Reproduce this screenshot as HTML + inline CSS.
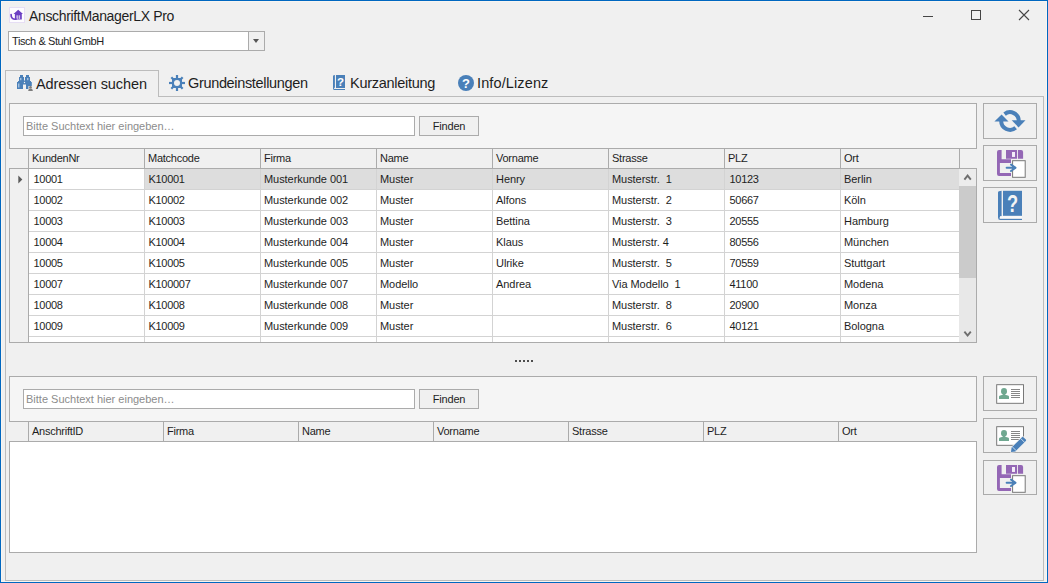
<!DOCTYPE html>
<html lang="de">
<head>
<meta charset="utf-8">
<title>AnschriftManagerLX Pro</title>
<style>
*{box-sizing:border-box;margin:0;padding:0}
html,body{width:1048px;height:583px;overflow:hidden;background:#f0f0f0}
body{font-family:"Liberation Sans","DejaVu Sans",sans-serif;font-size:11px;color:#1e1e1e;position:relative}
.abs{position:absolute}
#win{position:absolute;left:0;top:0;width:1048px;height:583px;border:1px solid #0067c0;box-shadow:inset 0 0 0 1px #f8f5f1;background:#f0f0f0}
#title{position:absolute;left:29px;top:7px;font-size:14px;letter-spacing:-0.34px;line-height:18px;color:#1e1e1e;white-space:nowrap}
#combo{position:absolute;left:8px;top:31px;width:257px;height:20px;border:1px solid #ababab;background:#fff}
#combo .txt{position:absolute;left:3px;top:0;line-height:19px;font-size:11px;white-space:nowrap;letter-spacing:-0.42px}
#combo .dd{position:absolute;right:0;top:0;width:16px;height:18px;border-left:1px solid #ababab;background:#f0f0f0}
#combo .dd:after{content:"";position:absolute;left:4px;top:7px;border:3.5px solid transparent;border-top:4px solid #555;border-bottom:none}
#tabpage{position:absolute;left:5px;top:96px;width:1039px;height:485px;border:1px solid #bcbcbc;background:#f0f0f0}
.tab{position:absolute;top:70px;height:27px;font-size:14.5px;line-height:26px;white-space:nowrap;color:#1e1e1e}
.tab.act{left:5px;width:154px;border:1px solid #bcbcbc;border-bottom:none;background:#f0f0f0}
.tab span{position:absolute;top:0}
.panel{position:absolute;left:9px;width:968px;border:1px solid #ababab;background:#f5f5f5}
.search{position:absolute;left:23px;width:392px;height:20px;border:1px solid #ababab;background:#fff;color:#8c8c8c;font-size:11px;line-height:18px;padding-left:2px;white-space:nowrap}
.find{letter-spacing:-0.2px;position:absolute;left:419px;width:60px;height:20px;border:1px solid #ababab;background:#f0f0f0;text-align:center;line-height:18px;font-size:11px}
.hdr{position:absolute;left:9px;height:21px;border-top:1px solid #ababab;border-bottom:1px solid #ababab;background:#f0f0f0;width:968px}
.hc{position:absolute;top:0;height:19px;line-height:19px;border-left:1px solid #ababab;padding-left:3px;font-size:11px;white-space:nowrap;letter-spacing:-0.25px}
.row{position:absolute;left:18px;width:931px;height:21px;border-bottom:1px solid #d3d3d3;background:#fff}
.row.sel{background:#dddddd}
.c{position:absolute;top:0;height:20px;line-height:20px;border-left:1px solid #d3d3d3;padding-left:4px;font-size:11px;white-space:nowrap}
.c{padding-left:3px;letter-spacing:-0.06px}
.c.n{letter-spacing:-0.3px;padding-left:4.5px}
.c.n.k{padding-left:3.5px}
.btn{position:absolute;left:983px;width:54px;height:35px;border:1px solid #ababab;background:#f0f0f0}
.btn svg{position:absolute}
</style>
</head>
<body>
<div id="win"></div>
<svg class="abs" style="left:9px;top:7px" width="16" height="16" viewBox="0 0 16 16"><rect x="0.5" y="0.5" width="15" height="15" fill="#fdfcff" stroke="#e6def4"/><path d="M9.2 2.7 L14 7.1 H12.8 V12.6 H5.9 V7.1 H4.5 Z" fill="#6b3fc3"/><rect x="7.4" y="8.3" width="1.5" height="3.6" fill="#cfc2ea"/><rect x="9.6" y="8.3" width="1.5" height="3.6" fill="#cfc2ea"/><path d="M2.1 7.6 C1.8 11.2 4.2 12.6 7 12.2" fill="none" stroke="#6b3fc3" stroke-width="1.7" stroke-linecap="round"/></svg>

<svg class="abs" style="left:910px;top:0" width="138" height="32" viewBox="0 0 138 32"><g fill="none" stroke="#454545" stroke-width="1"><path d="M13 16.5 H23"/><rect x="61.5" y="10.5" width="9" height="9"/><path d="M109 10 L119 20 M119 10 L109 20" stroke-width="1.1"/></g></svg>
<div id="title">AnschriftManagerLX Pro</div>
<div id="combo"><div class="txt">Tisch &amp; Stuhl GmbH</div><div class="dd"></div></div>
<div id="tabpage"></div>
<div class="tab act"><span style="left:30px;letter-spacing:-0.07px">Adressen suchen</span></div>
<div class="tab" style="left:168px"><span style="left:20px;letter-spacing:-0.34px">Grundeinstellungen</span></div>
<div class="tab" style="left:332px"><span style="left:18px;letter-spacing:-0.27px">Kurzanleitung</span></div>
<div class="tab" style="left:458px"><span style="left:19px;letter-spacing:0.12px">Info/Lizenz</span></div>
<svg class="abs" style="left:16px;top:74px" width="18" height="18" viewBox="0 0 18 18"><g fill="#4a80b9"><rect x="4" y="1" width="3" height="2"/><rect x="3" y="3" width="5" height="4"/><rect x="2" y="7" width="6.5" height="2"/><rect x="1" y="8" width="6" height="7"/><rect x="10" y="1" width="3" height="2"/><rect x="9" y="3" width="5" height="4"/><rect x="9" y="7" width="6" height="2"/><rect x="10" y="8" width="5.8" height="4"/><rect x="10" y="12" width="2.4" height="3"/><rect x="7" y="6.5" width="3" height="4"/></g><rect x="4.3" y="4" width="1" height="2.2" fill="#c9dcef"/><rect x="11.3" y="4" width="1" height="2.2" fill="#c9dcef"/><rect x="2.3" y="9.5" width="1" height="4" fill="#c9dcef"/><circle cx="8.5" cy="8.5" r="0.7" fill="#f0f0f0"/><g fill="#7d7d7d"><circle cx="14.5" cy="13.3" r="1.3"/><path d="M12.2 17 C12.2 15 13.5 14.6 14.5 14.6 C15.5 14.6 16.8 15 16.8 17 Z"/></g></svg><svg class="abs" style="left:168px;top:74px" width="18" height="18" viewBox="-9 -9 18 18"><g fill="#4a80b9"><rect x="-1.1" y="-8" width="2.2" height="4" transform="rotate(0)"/><rect x="-1.1" y="-8" width="2.2" height="4" transform="rotate(45)"/><rect x="-1.1" y="-8" width="2.2" height="4" transform="rotate(90)"/><rect x="-1.1" y="-8" width="2.2" height="4" transform="rotate(135)"/><rect x="-1.1" y="-8" width="2.2" height="4" transform="rotate(180)"/><rect x="-1.1" y="-8" width="2.2" height="4" transform="rotate(225)"/><rect x="-1.1" y="-8" width="2.2" height="4" transform="rotate(270)"/><rect x="-1.1" y="-8" width="2.2" height="4" transform="rotate(315)"/><path fill-rule="evenodd" d="M-5 -4 Q-5 -5 -4 -5 H4 Q5 -5 5 -4 V4 Q5 5 4 5 H-4 Q-5 5 -5 4 Z M3 0 A3 3 0 1 0 -3 0 A3 3 0 1 0 3 0 Z"/></g></svg><svg class="abs" style="left:332px;top:74px" width="16" height="18" viewBox="0 0 16 18"><g fill="#4a80b9"><path d="M1 2.2 Q1 1 2.9 1 V13.6 Q2 13.8 2 14.8 Q2 15 2.6 15 H13 V16 H2.6 Q1 16 1 14.4 Z"/><rect x="4" y="1" width="9" height="13"/></g><text x="8.5" y="11.8" font-family="Liberation Sans,sans-serif" font-weight="bold" font-size="11.5" text-anchor="middle" fill="#fff">?</text></svg><svg class="abs" style="left:457px;top:74px" width="18" height="18" viewBox="0 0 18 18"><circle cx="9" cy="9" r="8" fill="#4a80b9"/><text x="9" y="13.6" font-family="Liberation Sans,sans-serif" font-weight="bold" font-size="13" text-anchor="middle" fill="#fff">?</text></svg>
<!--GRID-->
<div class="panel" style="top:103px;height:240px"></div>
<div class="search" style="top:116px">Bitte Suchtext hier eingeben…</div>
<div class="find" style="top:116px">Finden</div>
<div class="abs" id="g1" style="left:10px;top:169px;width:966px;height:173px;overflow:hidden;background:#fff">
<div class="abs" style="left:0;top:0;width:18px;height:173px;background:#f0f0f0"></div>
<div class="row sel" style="top:0px">
<div class="c n" style="left:0px;width:116px;background:#fff">10001</div>
<div class="c n k" style="left:116px;width:116px">K10001</div>
<div class="c" style="left:232px;width:116px">Musterkunde 001</div>
<div class="c" style="left:348px;width:116px">Muster</div>
<div class="c" style="left:464px;width:116px">Henry</div>
<div class="c" style="left:580px;width:116px">Musterstr.&nbsp; 1</div>
<div class="c n" style="left:696px;width:116px">10123</div>
<div class="c" style="left:812px;width:119px">Berlin</div>
</div>
<div class="row" style="top:21px">
<div class="c n" style="left:0px;width:116px">10002</div>
<div class="c n k" style="left:116px;width:116px">K10002</div>
<div class="c" style="left:232px;width:116px">Musterkunde 002</div>
<div class="c" style="left:348px;width:116px">Muster</div>
<div class="c" style="left:464px;width:116px">Alfons</div>
<div class="c" style="left:580px;width:116px">Musterstr.&nbsp; 2</div>
<div class="c n" style="left:696px;width:116px">50667</div>
<div class="c" style="left:812px;width:119px">Köln</div>
</div>
<div class="row" style="top:42px">
<div class="c n" style="left:0px;width:116px">10003</div>
<div class="c n k" style="left:116px;width:116px">K10003</div>
<div class="c" style="left:232px;width:116px">Musterkunde 003</div>
<div class="c" style="left:348px;width:116px">Muster</div>
<div class="c" style="left:464px;width:116px">Bettina</div>
<div class="c" style="left:580px;width:116px">Musterstr.&nbsp; 3</div>
<div class="c n" style="left:696px;width:116px">20555</div>
<div class="c" style="left:812px;width:119px">Hamburg</div>
</div>
<div class="row" style="top:63px">
<div class="c n" style="left:0px;width:116px">10004</div>
<div class="c n k" style="left:116px;width:116px">K10004</div>
<div class="c" style="left:232px;width:116px">Musterkunde 004</div>
<div class="c" style="left:348px;width:116px">Muster</div>
<div class="c" style="left:464px;width:116px">Klaus</div>
<div class="c" style="left:580px;width:116px">Musterstr. 4</div>
<div class="c n" style="left:696px;width:116px">80556</div>
<div class="c" style="left:812px;width:119px">München</div>
</div>
<div class="row" style="top:84px">
<div class="c n" style="left:0px;width:116px">10005</div>
<div class="c n k" style="left:116px;width:116px">K10005</div>
<div class="c" style="left:232px;width:116px">Musterkunde 005</div>
<div class="c" style="left:348px;width:116px">Muster</div>
<div class="c" style="left:464px;width:116px">Ulrike</div>
<div class="c" style="left:580px;width:116px">Musterstr.&nbsp; 5</div>
<div class="c n" style="left:696px;width:116px">70559</div>
<div class="c" style="left:812px;width:119px">Stuttgart</div>
</div>
<div class="row" style="top:105px">
<div class="c n" style="left:0px;width:116px">10007</div>
<div class="c n k" style="left:116px;width:116px">K100007</div>
<div class="c" style="left:232px;width:116px">Musterkunde 007</div>
<div class="c" style="left:348px;width:116px">Modello</div>
<div class="c" style="left:464px;width:116px">Andrea</div>
<div class="c" style="left:580px;width:116px">Via Modello&nbsp; 1</div>
<div class="c n" style="left:696px;width:116px">41100</div>
<div class="c" style="left:812px;width:119px">Modena</div>
</div>
<div class="row" style="top:126px">
<div class="c n" style="left:0px;width:116px">10008</div>
<div class="c n k" style="left:116px;width:116px">K10008</div>
<div class="c" style="left:232px;width:116px">Musterkunde 008</div>
<div class="c" style="left:348px;width:116px">Muster</div>
<div class="c" style="left:464px;width:116px"></div>
<div class="c" style="left:580px;width:116px">Musterstr.&nbsp; 8</div>
<div class="c n" style="left:696px;width:116px">20900</div>
<div class="c" style="left:812px;width:119px">Monza</div>
</div>
<div class="row" style="top:147px">
<div class="c n" style="left:0px;width:116px">10009</div>
<div class="c n k" style="left:116px;width:116px">K10009</div>
<div class="c" style="left:232px;width:116px">Musterkunde 009</div>
<div class="c" style="left:348px;width:116px">Muster</div>
<div class="c" style="left:464px;width:116px"></div>
<div class="c" style="left:580px;width:116px">Musterstr.&nbsp; 6</div>
<div class="c n" style="left:696px;width:116px">40121</div>
<div class="c" style="left:812px;width:119px">Bologna</div>
</div>
<div class="row" style="top:168px">
<div class="c n" style="left:0px;width:116px"></div>
<div class="c n k" style="left:116px;width:116px"></div>
<div class="c" style="left:232px;width:116px"></div>
<div class="c" style="left:348px;width:116px"></div>
<div class="c" style="left:464px;width:116px"></div>
<div class="c" style="left:580px;width:116px"></div>
<div class="c n" style="left:696px;width:116px"></div>
<div class="c" style="left:812px;width:119px"></div>
</div>
<div class="abs" style="left:18px;top:0;width:1px;height:173px;background:#ababab"></div>
<svg class="abs" style="left:8px;top:6px" width="5" height="9" viewBox="0 0 5 9"><path d="M0.3 0.5 L4.3 4.5 L0.3 8.5 Z" fill="#5a5a5a"/></svg>
</div>
<div class="hdr" style="top:148px">
<div class="hc" style="left:19px;width:116px">KundenNr</div>
<div class="hc" style="left:135px;width:116px">Matchcode</div>
<div class="hc" style="left:251px;width:116px">Firma</div>
<div class="hc" style="left:367px;width:116px">Name</div>
<div class="hc" style="left:483px;width:116px">Vorname</div>
<div class="hc" style="left:599px;width:116px">Strasse</div>
<div class="hc" style="left:715px;width:116px">PLZ</div>
<div class="hc" style="left:831px;width:116px">Ort</div>
<div class="hc" style="left:950px;width:17px"></div>
</div>
<div class="panel" style="top:376px;height:177px"></div>
<div class="search" style="top:389px">Bitte Suchtext hier eingeben…</div>
<div class="find" style="top:389px">Finden</div>
<div class="abs" style="left:10px;top:442px;width:966px;height:110px;background:#fff"></div>
<div class="hdr" style="top:421px">
<div class="hc" style="left:19px;width:135px">AnschriftID</div>
<div class="hc" style="left:154px;width:135px">Firma</div>
<div class="hc" style="left:289px;width:135px">Name</div>
<div class="hc" style="left:424px;width:135px">Vorname</div>
<div class="hc" style="left:559px;width:135px">Strasse</div>
<div class="hc" style="left:694px;width:135px">PLZ</div>
<div class="hc" style="left:829px;width:135px">Ort</div>
</div>
<div class="abs" style="left:959px;top:169px;width:17px;height:173px;background:#e8e8e8"></div>
<div class="abs" style="left:959px;top:169px;width:17px;height:17px;background:#ececec"></div>
<div class="abs" style="left:959px;top:186px;width:17px;height:92px;background:#cbcbcb"></div>
<svg class="abs" style="left:959px;top:169px" width="17" height="173" viewBox="0 0 17 173"><g fill="none" stroke="#6e6e6e" stroke-width="1.9"><path d="M5.4 10.6 L8.6 6.6 L11.8 10.6"/><path d="M5.4 162.6 L8.6 166.6 L11.8 162.6"/></g></svg>
<!--/GRID-->
<div class="abs" style="left:515px;top:360px;width:2px;height:2px;background:#4d4d4d"></div><div class="abs" style="left:519px;top:360px;width:2px;height:2px;background:#4d4d4d"></div><div class="abs" style="left:523px;top:360px;width:2px;height:2px;background:#4d4d4d"></div><div class="abs" style="left:527px;top:360px;width:2px;height:2px;background:#4d4d4d"></div><div class="abs" style="left:531px;top:360px;width:2px;height:2px;background:#4d4d4d"></div>
<div class="btn" style="top:103px;height:36px"><svg class="abs" style="left:-1px;top:-1px" width="54" height="36" viewBox="0 0 54 36"><g fill="none" stroke="#4a80b9" stroke-width="4"><path d="M21.58 11.07 A8.8 8.8 0 0 1 35.80 18.00"/><path d="M18.20 18.00 A8.8 8.8 0 0 0 32.66 24.74"/></g><g stroke="#f0f0f0" stroke-width="1.3"><path d="M17.8 9.6 L27.2 19"/><path d="M27 16.6 L36.4 26"/></g><g fill="#4a80b9"><path d="M18.6 11.4 L25.5 18.6 H11.4 Z"/><path d="M28.7 17.2 H42.5 L35.5 24.4 Z"/></g></svg></div>
<div class="btn" style="top:145px;height:36px"><svg class="abs" style="left:-1px;top:-1px" width="54" height="36" viewBox="0 0 54 36"><g fill="#9467b5"><path d="M16 5 H18.6 V14.3 H28 V17.9 H16.9 V28 H28 V31 H16 Q14 31 14 29 V7 Q14 5 16 5 Z"/><path fill-rule="evenodd" d="M23 5 H34.1 V13.7 H23 Z M29 7 V11.8 H32 V7 Z"/><path d="M35 5 H38.1 Q40.1 5 40.1 7 V13.7 H35 Z"/></g><rect x="29" y="7" width="3" height="4.8" fill="#f4eef9"/><rect x="28.4" y="14.5" width="15" height="18.8" fill="#f0f0f0"/><rect x="29.6" y="15.7" width="12.6" height="16.6" fill="#fff" stroke="#777" stroke-width="1"/><g fill="none" stroke="#4a80b9" stroke-width="1.9" stroke-linecap="round" stroke-linejoin="round"><path d="M23.6 22.8 H32"/><path d="M28 19.6 L32.6 22.8 L28 26.1"/></g></svg></div>
<div class="btn" style="top:187px;height:36px"><svg class="abs" style="left:-1px;top:-1px" width="54" height="36" viewBox="0 0 54 36"><g fill="#4a80b9"><path d="M15 5.4 Q15 3.8 18.6 3.8 V29.4 Q16.4 29.6 16.4 31 Q16.4 31.7 17.4 31.7 H39 V32.9 H17.4 Q15 32.9 15 30.4 Z"/><rect x="20" y="3.8" width="19" height="25"/></g><rect x="17" y="29.2" width="22" height="2.2" fill="#fafafa"/><text transform="translate(29.5 25.2) scale(0.76 1)" x="0" y="0" font-family="Liberation Sans,sans-serif" font-weight="bold" font-size="24" text-anchor="middle" fill="#f4f4f4">?</text></svg></div>
<div class="btn" style="top:376px"><svg class="abs" style="left:-1px;top:-1px" width="54" height="36" viewBox="0 0 54 36"><rect x="13.7" y="8.7" width="26.8" height="18.6" fill="#fff" stroke="#727272" stroke-width="0.95"/><g fill="#6fa890"><ellipse cx="21" cy="15.2" rx="3" ry="3.3"/><path d="M16 22.9 V20.6 Q16 19.4 18 19.2 L19.8 18.8 V17 H22.2 V18.8 L24 19.2 Q26 19.4 26 20.6 V22.9 Z"/></g><g fill="#7a7a7a"><rect x="28" y="13" width="9" height="0.9"/><rect x="28" y="15" width="9" height="0.9"/><rect x="28" y="17" width="9" height="0.9"/><rect x="28" y="19" width="9" height="0.9"/><rect x="28" y="21" width="9" height="0.9"/></g></svg></div>
<div class="btn" style="top:418px"><svg class="abs" style="left:-1px;top:-1px" width="54" height="36" viewBox="0 0 54 36"><rect x="13.7" y="8.7" width="26.8" height="18.6" fill="#fff" stroke="#727272" stroke-width="0.95"/><g fill="#6fa890"><ellipse cx="21" cy="15.2" rx="3" ry="3.3"/><path d="M16 22.9 V20.6 Q16 19.4 18 19.2 L19.8 18.8 V17 H22.2 V18.8 L24 19.2 Q26 19.4 26 20.6 V22.9 Z"/></g><g fill="#7a7a7a"><rect x="28" y="13" width="9" height="0.9"/><rect x="28" y="15" width="9" height="0.9"/><rect x="28" y="17" width="9" height="0.9"/><rect x="28" y="19" width="9" height="0.9"/><rect x="28" y="21" width="9" height="0.9"/></g><path d="M39.6 24 H42 V28.6 H35.5 Z" fill="#f0f0f0"/><path d="M28 34 L28.6 29.6 L39 19.2 Q39.7 18.5 40.4 19.2 L42.8 21.6 Q43.5 22.3 42.8 23 L32.4 33.4 Z" fill="#4a80b9" stroke="#f0f0f0" stroke-width="1.4" paint-order="stroke"/><g stroke="#e8f0f8" stroke-width="0.8"><path d="M37.6 20.4 L41.8 24.6"/><path d="M29.3 28.8 L33.3 32.8"/></g></svg></div>
<div class="btn" style="top:460px"><svg class="abs" style="left:-1px;top:-1px" width="54" height="36" viewBox="0 0 54 36"><g fill="#9467b5"><path d="M16 5 H18.6 V14.3 H28 V17.9 H16.9 V28 H28 V31 H16 Q14 31 14 29 V7 Q14 5 16 5 Z"/><path fill-rule="evenodd" d="M23 5 H34.1 V13.7 H23 Z M29 7 V11.8 H32 V7 Z"/><path d="M35 5 H38.1 Q40.1 5 40.1 7 V13.7 H35 Z"/></g><rect x="29" y="7" width="3" height="4.8" fill="#f4eef9"/><rect x="28.4" y="14.5" width="15" height="18.8" fill="#f0f0f0"/><rect x="29.6" y="15.7" width="12.6" height="16.6" fill="#fff" stroke="#777" stroke-width="1"/><g fill="none" stroke="#4a80b9" stroke-width="1.9" stroke-linecap="round" stroke-linejoin="round"><path d="M23.6 22.8 H32"/><path d="M28 19.6 L32.6 22.8 L28 26.1"/></g></svg></div>
</body>
</html>
